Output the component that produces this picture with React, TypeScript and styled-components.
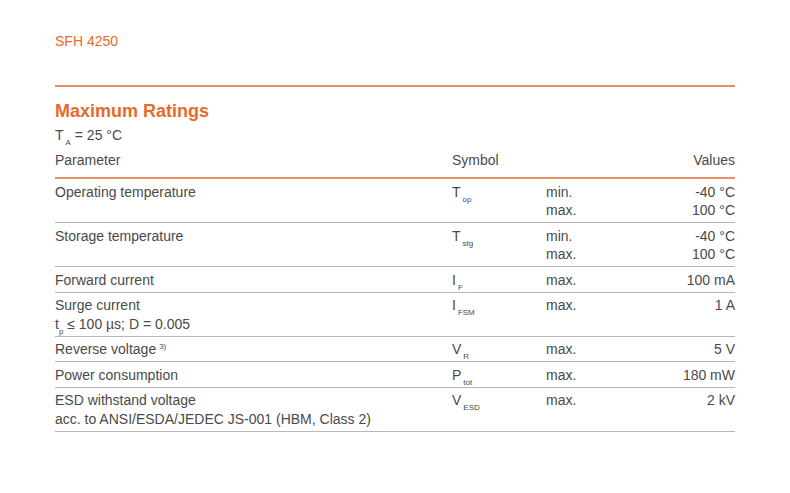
import React from "react";
import styled, { createGlobalStyle } from "styled-components";

const Global = createGlobalStyle`
  html, body { margin: 0; padding: 0; background: #fff; }
  body { font-family: "Liberation Sans", Arial, sans-serif; color: #4a4a4a; }
`;

const Page = styled.div`
  width: 790px;
  height: 493px;
  box-sizing: border-box;
  padding: 32px 55px 0 55px;
`;

const DocTitle = styled.div`
  color: #e8692c;
  font-size: 14px;
  line-height: 18px;
  height: 47px;
  border-bottom: 2px solid #e98e62;
  padding-bottom: 6px;
`;

const Heading = styled.h2`
  margin: 14px 0 0 0;
  color: #e8692c;
  font-size: 18px;
  line-height: 20px;
  font-weight: bold;
`;

const Cond = styled.div`
  font-size: 14px;
  line-height: 18px;
  margin-top: 5px;
`;

const Table = styled.div`
  display: grid;
  grid-template-columns: 397px 94px 1fr;
`;

const HeadRow = styled.div`
  display: contents;
  & > div {
    padding: 7px 0 8px 0;
    border-bottom: 2px solid #ea9466;
  }
`;

const Row = styled.div`
  display: contents;
  & > div {
    padding: 3.5px 0 2.5px 0;
    border-bottom: 1px solid #b8b8b8;
  }
`;

const Cell = styled.div<{ $right?: boolean }>`
  font-size: 14px;
  line-height: 18.5px;
  text-align: ${(p) => (p.$right ? "right" : "left")};
  white-space: nowrap;
`;

const HeadCell = styled(Cell)`
  line-height: 18px;
`;

const Sub = styled.span<{ $tight?: boolean }>`
  font-size: 8px;
  line-height: 0;
  position: relative;
  top: 5px;
  margin-left: ${(p) => (p.$tight ? "0" : "2px")};
`;

const Sup = styled.span`
  font-size: 8px;
  line-height: 0;
  position: relative;
  top: -5px;
  margin-left: 3px;
`;

const LimitVal = styled.div`
  display: grid;
  grid-template-columns: 94px 1fr;
`;

type R = {
  param: React.ReactNode;
  sym: string;
  sub: string;
  lim: string[];
  vals: string[];
};

const rows: R[] = [
  { param: "Operating temperature", sym: "T", sub: "op", lim: ["min.", "max."], vals: ["-40 °C", "100 °C"] },
  { param: "Storage temperature", sym: "T", sub: "stg", lim: ["min.", "max."], vals: ["-40 °C", "100 °C"] },
  { param: "Forward current", sym: "I", sub: "F", lim: ["max."], vals: ["100 mA"] },
  {
    param: (
      <>
        Surge current
        <br />
        t<Sub $tight>p</Sub> ≤ 100 µs; D = 0.005
      </>
    ),
    sym: "I",
    sub: "FSM",
    lim: ["max."],
    vals: ["1 A"],
  },
  { param: (<>Reverse voltage<Sup>3)</Sup></>), sym: "V", sub: "R", lim: ["max."], vals: ["5 V"] },
  { param: "Power consumption", sym: "P", sub: "tot", lim: ["max."], vals: ["180 mW"] },
  {
    param: (
      <>
        ESD withstand voltage
        <br />
        acc. to ANSI/ESDA/JEDEC JS-001 (HBM, Class 2)
      </>
    ),
    sym: "V",
    sub: "ESD",
    lim: ["max."],
    vals: ["2 kV"],
  },
];

export default function App() {
  return (
    <Page>
      <Global />
      <DocTitle>SFH 4250</DocTitle>
      <Heading>Maximum Ratings</Heading>
      <Cond>
        T<Sub>A</Sub> = 25 °C
      </Cond>
      <Table>
        <HeadRow>
          <HeadCell>Parameter</HeadCell>
          <HeadCell>Symbol</HeadCell>
          <HeadCell $right>Values</HeadCell>
        </HeadRow>
        {rows.map((r, i) => (
          <Row key={i}>
            <Cell>{r.param}</Cell>
            <Cell>
              {r.sym}
              <Sub>{r.sub}</Sub>
            </Cell>
            <LimitVal>
              <Cell>
                {r.lim.map((l, j) => (
                  <div key={j}>{l}</div>
                ))}
              </Cell>
              <Cell $right>
                {r.vals.map((v, j) => (
                  <div key={j}>{v}</div>
                ))}
              </Cell>
            </LimitVal>
          </Row>
        ))}
      </Table>
    </Page>
  );
}
